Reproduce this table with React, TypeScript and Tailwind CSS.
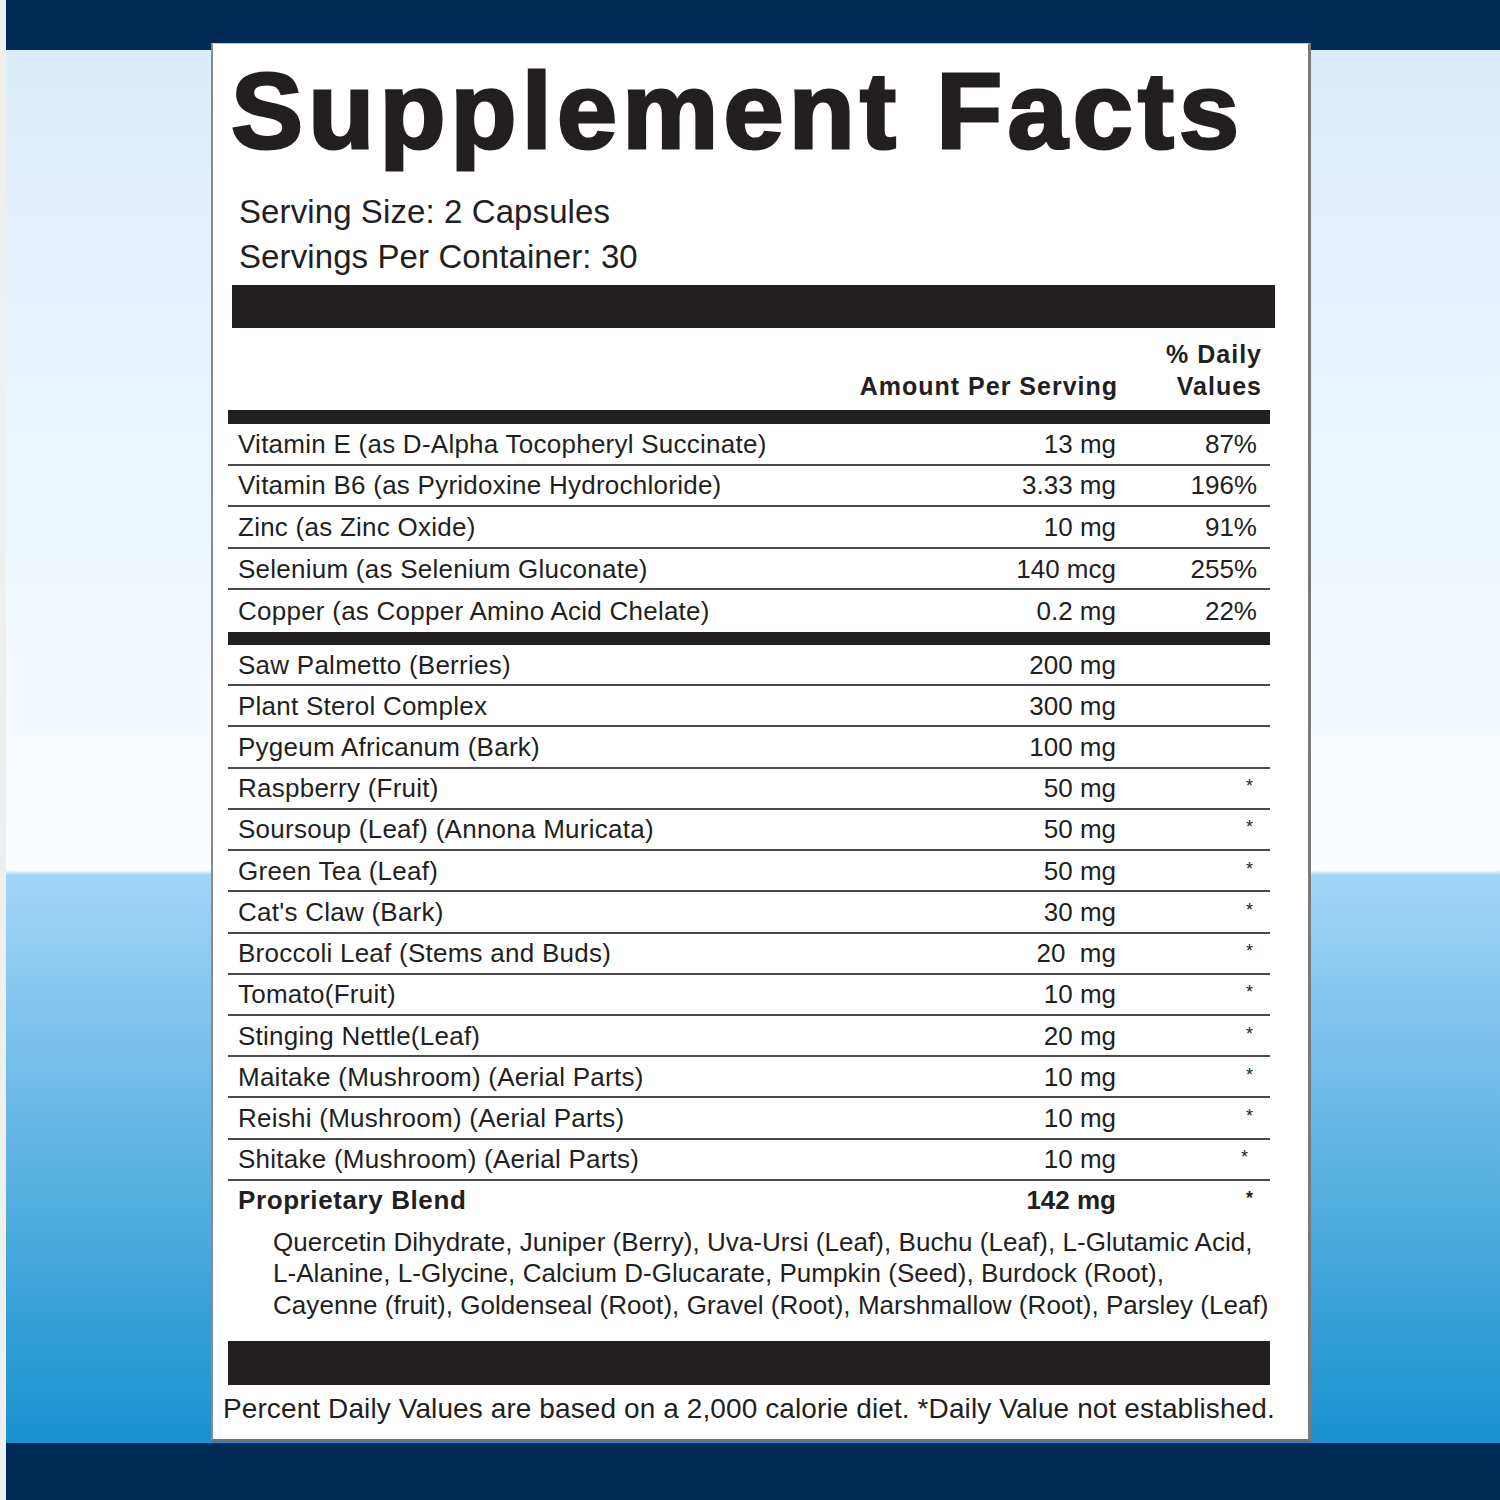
import React from "react";

type Row = { name: string; amt: string; dv?: string; star?: number };

const vitamins: Row[] = [
  { name: "Vitamin E (as D-Alpha Tocopheryl Succinate)", amt: "13 mg", dv: "87%" },
  { name: "Vitamin B6 (as Pyridoxine Hydrochloride)", amt: "3.33 mg", dv: "196%" },
  { name: "Zinc (as Zinc Oxide)", amt: "10 mg", dv: "91%" },
  { name: "Selenium (as Selenium Gluconate)", amt: "140 mcg", dv: "255%" },
  { name: "Copper (as Copper Amino Acid Chelate)", amt: "0.2 mg", dv: "22%" },
];

const herbs: Row[] = [
  { name: "Saw Palmetto (Berries)", amt: "200 mg" },
  { name: "Plant Sterol Complex", amt: "300 mg" },
  { name: "Pygeum Africanum (Bark)", amt: "100 mg" },
  { name: "Raspberry (Fruit)", amt: "50 mg", star: 4 },
  { name: "Soursoup (Leaf) (Annona Muricata)", amt: "50 mg", star: 4 },
  { name: "Green Tea (Leaf)", amt: "50 mg", star: 4 },
  { name: "Cat's Claw (Bark)", amt: "30 mg", star: 4 },
  { name: "Broccoli Leaf (Stems and Buds)", amt: "20  mg", star: 4 },
  { name: "Tomato(Fruit)", amt: "10 mg", star: 4 },
  { name: "Stinging Nettle(Leaf)", amt: "20 mg", star: 4 },
  { name: "Maitake (Mushroom) (Aerial Parts)", amt: "10 mg", star: 4 },
  { name: "Reishi (Mushroom) (Aerial Parts)", amt: "10 mg", star: 4 },
  { name: "Shitake (Mushroom) (Aerial Parts)", amt: "10 mg", star: 9 },
];

function Star({ pr }: { pr: number }) {
  return (
    <span
      className={`inline-block text-[18px] leading-none -translate-y-[5px] ${pr === 9 ? "pr-[9px]" : "pr-[4px]"}`}
    >
      *
    </span>
  );
}

function DataRow({ r, h, border }: { r: Row; h: string; border: boolean }) {
  return (
    <div
      className={`grid grid-cols-[1fr_auto_141px] items-center pl-[10px] pr-[13px] ${h} ${border ? "border-b-2 border-[#4a4a4a]" : ""}`}
    >
      <span className="leading-none whitespace-nowrap tracking-[0.25px]">{r.name}</span>
      <span className="leading-none text-right whitespace-pre">{r.amt}</span>
      <span className="leading-none text-right">
        {r.dv ? r.dv : r.star ? <Star pr={r.star} /> : null}
      </span>
    </div>
  );
}

export default function App() {
  return (
    <div className="flex w-[1500px] h-[1500px] overflow-hidden font-['Liberation_Sans',Arial,sans-serif] text-[#231f20]">
      <div className="w-[6px] h-full bg-[#eef0f0]" />
      <div className="flex-1 h-full bg-[linear-gradient(to_bottom,#002a56_0px,#002a56_50px,#dbedfa_50px,#fbfdff_870px,#a2d5f8_875px,#1891ce_1443px,#002a56_1443px,#002a56_1500px)]">
        <div className="ml-[205px] mt-[43px] w-[1100px] h-[1399px] bg-white border-l-2 border-t border-r-[3px] border-b-[3px] border-l-[#8a8a8a] border-t-[#c8c8c8] border-r-[#7a7a7a] border-b-[#6f6f6f] pl-[15px] pr-[38px] pt-[13px] flex flex-col">
          <h1 className="text-[108px] leading-none font-bold tracking-[5.2px] whitespace-nowrap [-webkit-text-stroke:3px_#231f20] ml-[3px]">
            Supplement Facts
          </h1>
          <div className="mt-[24px] pl-[11px] text-[33px] leading-[45px] tracking-[0.1px]">
            <div>Serving Size: 2 Capsules</div>
            <div>Servings Per Container: 30</div>
          </div>
          <div className="mt-[6px] h-[43px] ml-[4px] -mr-[5px] bg-[#231f20]" />
          <div className="mt-[10px] flex justify-end items-end gap-[48px] pr-[8px] font-bold text-[25px] leading-[32px] tracking-[1px]">
            <div>Amount Per Serving</div>
            <div className="text-right">
              <div>% Daily</div>
              <div>Values</div>
            </div>
          </div>
          <div className="mt-[8px] h-[14px] bg-[#231f20]" />
          <div className="text-[26px]">
            {vitamins.map((r, i) => (
              <DataRow key={r.name} r={r} h="h-[41.6px]" border={i < vitamins.length - 1} />
            ))}
          </div>
          <div className="h-[13px] bg-[#231f20]" />
          <div className="text-[26px]">
            {herbs.map((r) => (
              <DataRow key={r.name} r={r} h="h-[41.23px]" border={true} />
            ))}
            <div className="grid grid-cols-[1fr_auto_141px] items-center pl-[10px] pr-[13px] h-[38px] font-bold">
              <span className="leading-none tracking-[0.6px]">Proprietary Blend</span>
              <span className="leading-none text-right">142 mg</span>
              <span className="leading-none text-right">
                <Star pr={4} />
              </span>
            </div>
          </div>
          <div className="mt-[8px] pl-[45px] text-[26px] leading-[31.5px] whitespace-nowrap tracking-[0.05px]">
            <div>Quercetin Dihydrate, Juniper (Berry), Uva-Ursi (Leaf), Buchu (Leaf), L-Glutamic Acid,</div>
            <div>L-Alanine, L-Glycine, Calcium D-Glucarate, Pumpkin (Seed), Burdock (Root),</div>
            <div>Cayenne (fruit), Goldenseal (Root), Gravel (Root), Marshmallow (Root), Parsley (Leaf)</div>
          </div>
          <div className="mt-[20px] h-[44px] bg-[#231f20]" />
          <div className="mt-[7px] -ml-[5px] text-[28px] leading-[33px] whitespace-nowrap tracking-[0.1px]">
            Percent Daily Values are based on a 2,000 calorie diet. *Daily Value not established.
          </div>
        </div>
      </div>
    </div>
  );
}
